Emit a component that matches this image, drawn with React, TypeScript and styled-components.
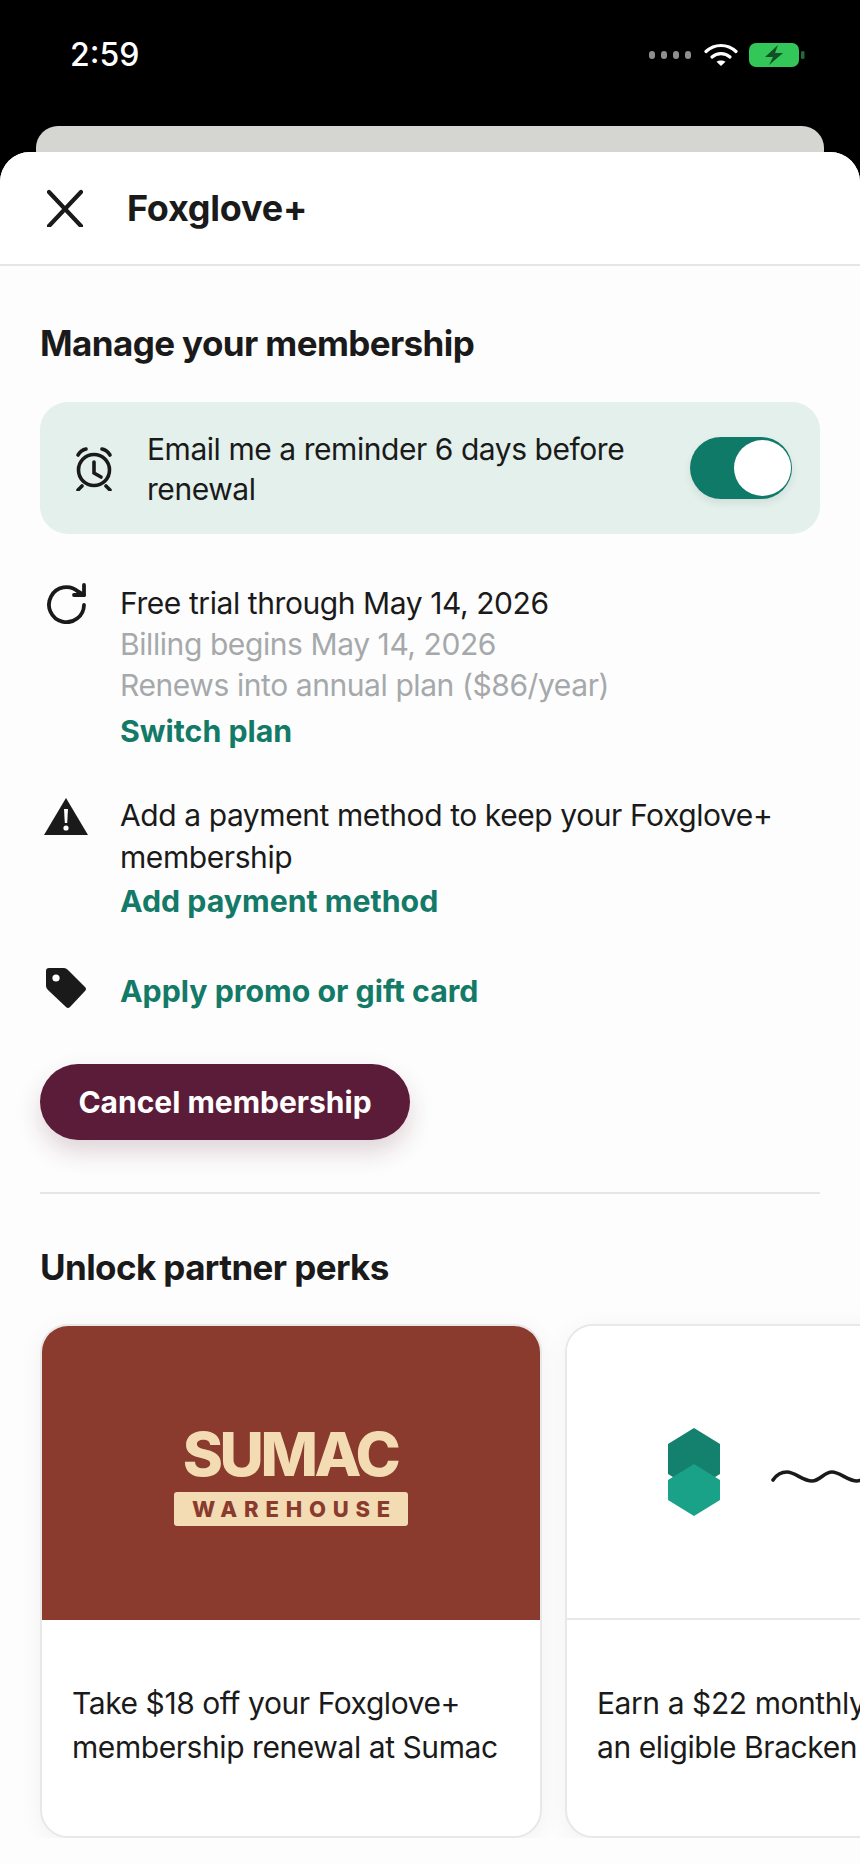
import React from "react";
import styled, { createGlobalStyle } from "styled-components";

const GlobalStyle = createGlobalStyle`
  html, body {
    margin: 0;
    padding: 0;
    background: #000;
  }
  * {
    box-sizing: border-box;
  }
`;

const Screen = styled.div`
  width: 860px;
  height: 1864px;
  overflow: hidden;
  background: #000;
  font-family: Inter, "Liberation Sans", sans-serif;
  color: #1a1a1a;
`;

const StatusBar = styled.div`
  display: flex;
  align-items: flex-start;
  justify-content: space-between;
  height: 126px;
  padding: 37px 55px 0 70px;
`;

const Clock = styled.span`
  font-size: 32px;
  line-height: 36px;
  font-weight: 500;
  color: #fff;
`;

const StatusIcons = styled.div`
  display: flex;
  align-items: center;
  height: 36px;
`;

const SignalDots = styled.div`
  display: flex;
  gap: 6px;
  margin-right: 13px;
`;

const SignalDot = styled.span`
  width: 6px;
  height: 8px;
  border-radius: 3px;
  background: #8e8e8e;
`;

const BehindCard = styled.div`
  height: 26px;
  margin: 0 36px;
  background: #d5d5d2;
  border-radius: 22px 22px 0 0;
`;

const Sheet = styled.div`
  height: 1712px;
  background: #fdfdfd;
  border-radius: 30px 30px 0 0;
  overflow: hidden;
`;

const Header = styled.div`
  display: flex;
  align-items: center;
  gap: 44px;
  height: 114px;
  padding: 0 0 0 47px;
  background: #fff;
  border-bottom: 2px solid #e6e6e6;
`;

const HeaderTitle = styled.h1`
  margin: 0;
  font-size: 36px;
  line-height: 40px;
  font-weight: 700;
  letter-spacing: -0.25px;
`;

const Content = styled.div`
  padding: 0 40px;
`;

const SectionTitle = styled.h2`
  margin: 0;
  font-size: 35px;
  line-height: 40px;
  font-weight: 700;
  letter-spacing: -0.6px;
`;

const ManageTitle = styled(SectionTitle)`
  padding-top: 57px;
`;

const ReminderBox = styled.div`
  display: flex;
  align-items: center;
  height: 132px;
  margin-top: 39px;
  padding: 0 28px 0 35px;
  background: #e3f0eb;
  border-radius: 28px;
`;

const ReminderText = styled.div`
  flex: 1;
  margin-left: 34px;
  padding-top: 2px;
  font-size: 30px;
  line-height: 40px;
  letter-spacing: -0.45px;
`;

const Toggle = styled.div`
  display: flex;
  align-items: center;
  justify-content: flex-end;
  flex: none;
  width: 102px;
  height: 62px;
  padding-right: 1px;
  background: #107a68;
  border-radius: 31px;
  box-shadow: 0 4px 8px rgba(0, 0, 0, 0.08);
`;

const ToggleKnob = styled.span`
  width: 57px;
  height: 56px;
  border-radius: 50%;
  background: #fff;
`;

const InfoRow = styled.div<{ $top: number }>`
  display: flex;
  align-items: flex-start;
  margin-top: ${(p) => p.$top}px;
`;

const IconSlot = styled.div<{ $shift: number }>`
  flex: none;
  width: 80px;
  height: 42px;
  display: flex;
  align-items: center;
  padding-left: ${(p) => p.$shift}px;
`;

const InfoBody = styled.div`
  flex: 1;
  font-size: 30px;
  line-height: 42px;
  letter-spacing: -0.42px;
`;

const MutedLine = styled.div`
  color: #a5a9ab;
  line-height: 41px;
`;

const ActionLink = styled.div<{ $gap: number }>`
  margin-top: ${(p) => p.$gap}px;
  font-size: 30.3px;
  line-height: 42px;
  font-weight: 700;
  letter-spacing: 0;
  color: #137a67;
`;

const CancelButton = styled.div`
  display: flex;
  align-items: center;
  justify-content: center;
  width: 370px;
  height: 76px;
  margin-top: 52px;
  background: #5a1c38;
  border-radius: 38px;
  color: #fff;
  font-size: 30px;
  font-weight: 700;
  box-shadow: 0 12px 24px rgba(90, 28, 56, 0.18);
`;

const Divider = styled.div`
  height: 2px;
  margin-top: 52px;
  background: #e6e6e6;
`;

const PerksTitle = styled(SectionTitle)`
  padding-top: 53px;
`;

const Carousel = styled.div`
  display: flex;
  gap: 23px;
  width: 860px;
  margin: 17px 0 0 -40px;
  padding: 20px 0 0 40px;
  overflow: hidden;
`;

const PerkCard = styled.div`
  flex: none;
  width: 502px;
  height: 514px;
  background: #fff;
  border: 2px solid #e8e8e8;
  border-radius: 28px;
  overflow: hidden;
  box-shadow: 0 4px 24px rgba(0, 0, 0, 0.05);
`;

const PerkBrand = styled.div<{ $bg: string }>`
  display: flex;
  flex-direction: column;
  align-items: center;
  justify-content: center;
  height: 294px;
  padding-top: 3px;
  background: ${(p) => p.$bg};
`;

const BrandRow = styled(PerkBrand)`
  flex-direction: row;
  justify-content: flex-start;
  padding: 0 0 0 101px;
  border-bottom: 2px solid #e8e8e8;
`;

const SumacName = styled.div`
  padding-right: 2px;
  font-size: 61px;
  line-height: 62px;
  font-weight: 800;
  letter-spacing: -3.4px;
  color: #f3dcb4;
`;

const WarehouseTag = styled.div`
  display: flex;
  align-items: center;
  justify-content: center;
  width: 234px;
  height: 34px;
  margin-top: 7px;
  padding-left: 7px;
  background: #f3dcb4;
  border-radius: 3px;
  color: #8a3b2e;
  font-size: 22px;
  font-weight: 800;
  letter-spacing: 6.8px;
`;

const PerkText = styled.div`
  padding: 61px 0 0 30px;
  font-size: 30px;
  line-height: 44px;
  letter-spacing: -0.43px;
  white-space: nowrap;
`;

function CloseIcon() {
  return (
    <svg width="36" height="38" viewBox="0 0 36 38" fill="none">
      <path d="M2 3 L34 37 M34 3 L2 37" stroke="#1a1a1a" strokeWidth="4.2" strokeLinecap="round" />
    </svg>
  );
}

function AlarmIcon() {
  return (
    <svg width="38" height="46" viewBox="0 0 38 46" fill="none" stroke="#1a1a1a" strokeWidth="3.6" strokeLinecap="round">
      <circle cx="19" cy="25" r="15.5" />
      <path d="M19 17 V28 L26 32" />
      <path d="M3 10 Q6 5 11 4" />
      <path d="M35 10 Q32 5 27 4" />
      <path d="M7 41 L3 45 M31 41 L35 45" />
    </svg>
  );
}

function RefreshIcon() {
  return (
    <svg width="40" height="42" viewBox="0 0 40 42" fill="none" stroke="#1a1a1a" strokeWidth="3.8" strokeLinecap="round" strokeLinejoin="round">
      <path d="M37 23 A17.5 17.5 0 1 1 31 9.5 L37 13" />
      <path d="M37 3 V13 H27" />
    </svg>
  );
}

function WarningIcon() {
  return (
    <svg width="44" height="38" viewBox="0 0 44 38" style={{ marginTop: 3 }}>
      <path d="M22 0 L44 37 H0 Z" fill="#1a1a1a" />
      <path d="M20 11 H24 L23.2 25 H20.8 Z" fill="#fff" />
      <circle cx="22" cy="30" r="2.6" fill="#fff" />
    </svg>
  );
}

function TagIcon() {
  return (
    <svg width="42" height="42" viewBox="0 0 42 42">
      <path d="M3 0 H18 Q20 0 22 2 L39 19 Q41 21 39 23 L24 39 Q22 41 20 39 L2 22 Q0 20 0 18 V3 Q0 0 3 0 Z" fill="#1a1a1a" />
      <circle cx="10" cy="10" r="3.6" fill="#fff" />
    </svg>
  );
}

function WifiIcon() {
  return (
    <svg width="34" height="24" viewBox="0 0 34 24" fill="none" stroke="#fff" strokeWidth="3.2" strokeLinecap="round">
      <path d="M2 8.5 C10.5 0.5 23.5 0.5 32 8.5" />
      <path d="M8 14 C13 9.5 21 9.5 26 14" />
      <path d="M17 23 L12.5 18.8 C15 17 19 17 21.5 18.8 Z" fill="#fff" stroke="none" />
    </svg>
  );
}

function BatteryIcon() {
  return (
    <svg width="56" height="24" viewBox="0 0 56 24" style={{ marginLeft: 11 }}>
      <rect width="50" height="24" rx="7" fill="#33c75a" />
      <rect x="52" y="8" width="3.5" height="8" rx="1.5" fill="#1f6b3a" />
      <path d="M29 2 L16 14 H24 L20 22 L34 10 H26 Z" fill="#124f27" />
    </svg>
  );
}

function HexLogo() {
  return (
    <svg width="52" height="88" viewBox="0 0 52 88" style={{ flex: "none" }}>
      <path d="M26 0 L52 16 V46 L26 62 L0 46 V16 Z" fill="#14806e" />
      <path d="M26 36 L52 52 V72 L26 88 L0 72 V52 Z" fill="#19a288" />
    </svg>
  );
}

function Squiggle() {
  return (
    <svg width="190" height="22" viewBox="0 0 190 22" fill="none" style={{ flex: "none", marginLeft: 51, marginTop: 10 }}>
      <path
        d="M2 14 C6 8 11 6 16 6 C24 6 32 15 41 15 C49 15 53 6 61 6 C69 6 77 15 86 15 C94 15 98 6 106 6"
        stroke="#1a1a1a"
        strokeWidth="3.6"
        strokeLinecap="round"
      />
    </svg>
  );
}

function App() {
  return (
    <Screen>
      <GlobalStyle />
      <StatusBar>
        <Clock>2:59</Clock>
        <StatusIcons>
          <SignalDots>
            <SignalDot />
            <SignalDot />
            <SignalDot />
            <SignalDot />
          </SignalDots>
          <WifiIcon />
          <BatteryIcon />
        </StatusIcons>
      </StatusBar>
      <BehindCard />
      <Sheet>
        <Header>
          <CloseIcon />
          <HeaderTitle>Foxglove+</HeaderTitle>
        </Header>
        <Content>
          <ManageTitle>Manage your membership</ManageTitle>
          <ReminderBox>
            <AlarmIcon />
            <ReminderText>Email me a reminder 6 days before renewal</ReminderText>
            <Toggle>
              <ToggleKnob />
            </Toggle>
          </ReminderBox>
          <InfoRow $top={48}>
            <IconSlot $shift={7}>
              <RefreshIcon />
            </IconSlot>
            <InfoBody>
              Free trial through May 14, 2026
              <MutedLine>Billing begins May 14, 2026</MutedLine>
              <MutedLine>Renews into annual plan ($86/year)</MutedLine>
              <ActionLink $gap={4}>Switch plan</ActionLink>
            </InfoBody>
          </InfoRow>
          <InfoRow $top={42}>
            <IconSlot $shift={4}>
              <WarningIcon />
            </IconSlot>
            <InfoBody>
              Add a payment method to keep your Foxglove+ membership
              <ActionLink $gap={2}>Add payment method</ActionLink>
            </InfoBody>
          </InfoRow>
          <InfoRow $top={46}>
            <IconSlot $shift={6}>
              <TagIcon />
            </IconSlot>
            <InfoBody>
              <ActionLink $gap={2}>Apply promo or gift card</ActionLink>
            </InfoBody>
          </InfoRow>
          <CancelButton>Cancel membership</CancelButton>
          <Divider />
          <PerksTitle>Unlock partner perks</PerksTitle>
          <Carousel>
            <PerkCard>
              <PerkBrand $bg="#8a3b2e">
                <SumacName>SUMAC</SumacName>
                <WarehouseTag>WAREHOUSE</WarehouseTag>
              </PerkBrand>
              <PerkText>
                Take $18 off your Foxglove+
                <br />
                membership renewal at Sumac
              </PerkText>
            </PerkCard>
            <PerkCard>
              <BrandRow $bg="#fff">
                <HexLogo />
                <Squiggle />
              </BrandRow>
              <PerkText>
                Earn a $22 monthly credit with
                <br />
                an eligible Bracken account
              </PerkText>
            </PerkCard>
          </Carousel>
        </Content>
      </Sheet>
    </Screen>
  );
}

export default App;
